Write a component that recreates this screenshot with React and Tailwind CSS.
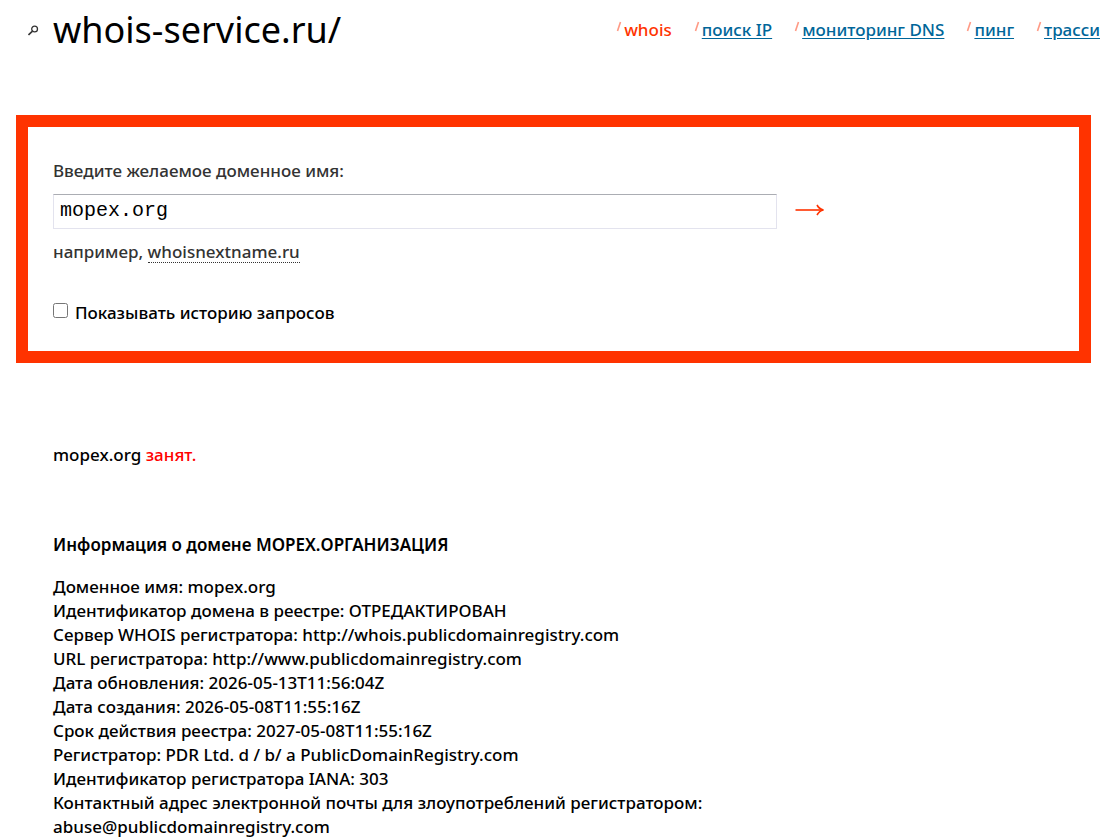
import React, { useState } from 'react';

const navItems = [
    { title: 'whois', active: true },
    { title: 'поиск IP' },
    { title: 'мониторинг DNS' },
    { title: 'пинг' },
    { title: 'трасси' },
];

const domainInfo = [
    'Доменное имя: mopex.org',
    'Идентификатор домена в реестре: ОТРЕДАКТИРОВАН',
    'Сервер WHOIS регистратора: http://whois.publicdomainregistry.com',
    'URL регистратора: http://www.publicdomainregistry.com',
    'Дата обновления: 2026-05-13T11:56:04Z',
    'Дата создания: 2026-05-08T11:55:16Z',
    'Срок действия реестра: 2027-05-08T11:55:16Z',
    'Регистратор: PDR Ltd. d / b/ a PublicDomainRegistry.com',
    'Идентификатор регистратора IANA: 303',
    'Контактный адрес электронной почты для злоупотреблений регистратором:',
    'abuse@publicdomainregistry.com',
];

const Header = () => (
    <header className="flex items-center pl-7 h-[60px]">
        <svg width="11" height="11" viewBox="0 0 11 11" fill="none" stroke="#333" className="shrink-0">
            <circle cx="6.6" cy="4" r="2.9" strokeWidth="1.3" />
            <path d="M4.5 6.2 L0.5 10" strokeWidth="1.6" />
        </svg>
        <h1 className="ml-[14px] text-[36px] leading-[60px] font-normal whitespace-nowrap">whois-service.ru/</h1>
        <nav className="ml-auto flex gap-[22px] pr-px leading-6 whitespace-nowrap">
            {navItems.map((item) => (
                <div key={item.title} className="flex">
                    <svg width="8" height="14" viewBox="0 0 8 14" className="shrink-0" aria-hidden="true">
                        <path d="M1.5 13 L4.5 4" stroke="#ff9a85" strokeWidth="1.6" />
                    </svg>
                    {item.active ? (
                        <span className="text-[#ff3300]">{item.title}</span>
                    ) : (
                        <a href="#" className="text-[#006699] underline underline-offset-2">
                            {item.title}
                        </a>
                    )}
                </div>
            ))}
        </nav>
    </header>
);

const SearchForm = () => {
    const [domain, setDomain] = useState('mopex.org');
    const [history, setHistory] = useState(false);

    return (
        <form
            className="mt-[55px] ml-4 mr-[10px] border-[12px] border-[#ff3300] px-[25px] pt-8 pb-[26px]"
            onSubmit={(e) => e.preventDefault()}
        >
            <label htmlFor="domain" className="block text-[#333333]">
                Введите желаемое доменное имя:
            </label>
            <div className="mt-[11px] flex items-center">
                <input
                    id="domain"
                    type="text"
                    value={domain}
                    onChange={(e) => setDomain(e.target.value)}
                    className="w-[724px] h-[35px] border border-[#e3e3ee] border-t-[#abadb3] px-[6px] pb-[2px] font-['Liberation_Mono',monospace] font-normal text-[20px] outline-none"
                />
                <button type="submit" aria-label="Проверить" className="ml-[18px] pb-[3px] text-[#ff3300]">
                    <svg width="30" height="14" viewBox="0 0 30 14" fill="none" stroke="currentColor">
                        <path d="M0.5 7 H28" strokeWidth="1.6" />
                        <path d="M22 2 C23.5 4.8 25.5 6.4 28.5 7 C25.5 7.6 23.5 9.2 22 12" strokeWidth="1.6" />
                    </svg>
                </button>
            </div>
            <p className="mt-[11px] text-[#333333]">
                например,{' '}
                <button
                    type="button"
                    className="border-b border-dotted border-[#333333] leading-5"
                    onClick={() => setDomain('whoisnextname.ru')}
                >
                    whoisnextname.ru
                </button>
            </p>
            <div className="mt-[37px] flex items-center gap-[7px]">
                <input
                    id="history"
                    type="checkbox"
                    checked={history}
                    onChange={(e) => setHistory(e.target.checked)}
                    className="size-[15px] mb-[5px]"
                />
                <label htmlFor="history">Показывать историю запросов</label>
            </div>
        </form>
    );
};

const App = () => (
    <div className="overflow-hidden bg-white text-black font-['Noto_Sans',sans-serif] font-medium text-[17px] leading-6">
        <Header />
        <SearchForm />
        <main className="mt-20 pl-[53px] pr-4">
            <p>
                mopex.org <span className="text-[#ff0000]">занят.</span>
            </p>
            <h2 className="mt-[66px] font-semibold">Информация о домене MOPEX.ОРГАНИЗАЦИЯ</h2>
            <div className="mt-[18px]">
                {domainInfo.map((line) => (
                    <p key={line}>{line}</p>
                ))}
            </div>
        </main>
    </div>
);

export default App;
